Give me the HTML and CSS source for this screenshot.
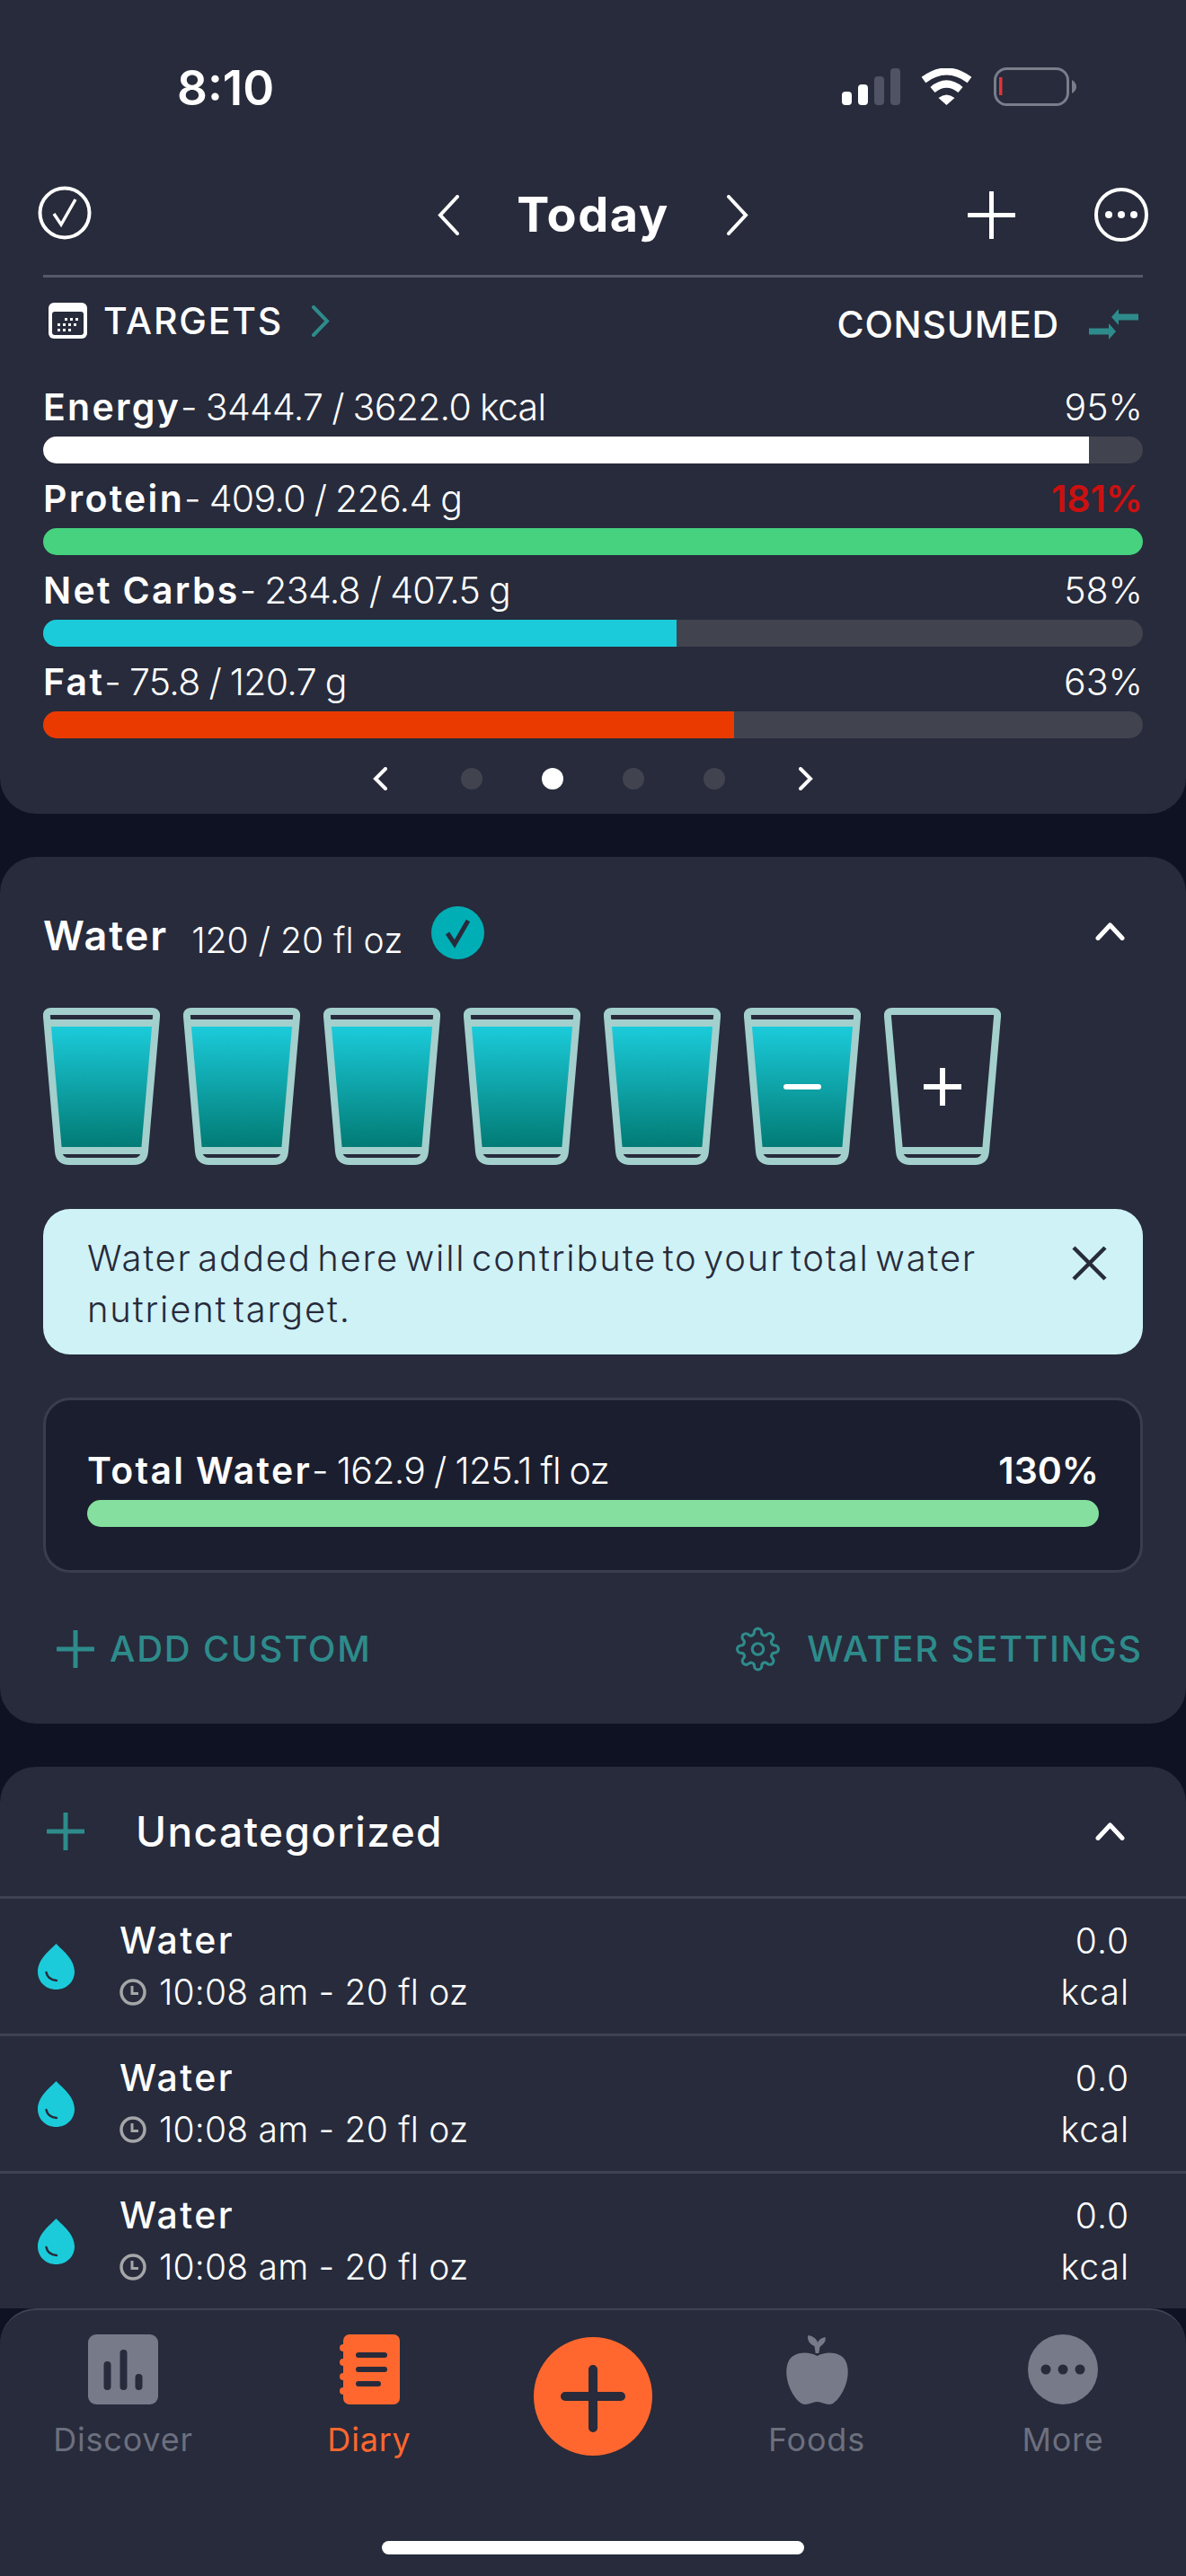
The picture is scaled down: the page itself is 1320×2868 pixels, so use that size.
FILE: index.html
```html
<!DOCTYPE html>
<html lang="en">
<head>
<meta charset="utf-8">
<title>Diary</title>
<link rel="stylesheet" href="styles.css">
</head>
<body>
<svg class="defs" aria-hidden="true">
  <defs>
    <linearGradient id="waterFill" x1="0" y1="0" x2="0" y2="1">
      <stop offset="0" stop-color="#1bcbda"/>
      <stop offset="1" stop-color="#027b75"/>
    </linearGradient>
    <symbol id="glass-full" viewBox="0 0 130 175">
      <path d="M8.3 21H121.7L110.7 155H19.3Z" fill="url(#waterFill)"/>
      <path d="M9 4H121Q127 4 126 10L113 160Q112 171 101 171H29Q18 171 17 160L4 10Q3 4 9 4Z" fill="none" stroke="#a3cfcd" stroke-width="8"/>
      <path d="M5 17H125M15 159H115" fill="none" stroke="#a3cfcd" stroke-width="8"/>
    </symbol>
    <symbol id="glass-empty" viewBox="0 0 130 175">
      <path d="M9 4H121Q127 4 126 10L113 160Q112 171 101 171H29Q18 171 17 160L4 10Q3 4 9 4Z" fill="none" stroke="#a3cfcd" stroke-width="8"/>
      <path d="M15 159H115" fill="none" stroke="#a3cfcd" stroke-width="8"/>
    </symbol>
    <symbol id="chev-up" viewBox="0 0 33 20">
      <path d="M3 17.5L16.5 3L30 17.5" fill="none" stroke="#fff" stroke-width="5" stroke-linecap="round" stroke-linejoin="round"/>
    </symbol>
    <symbol id="drop" viewBox="0 0 41 51">
      <path d="M20.5 0C26 6 41 17 41 31C41 42.500 32 51 20.500 51C9 51 0 42.500 0 31C0 17 15 6 20.500 0Z" fill="#1bcbda"/>
      <path d="M9.500 32C10.500 37 14 40.500 21 41" fill="none" stroke="#272b3b" stroke-width="2.500" stroke-linecap="round"/>
    </symbol>
    <symbol id="clock" viewBox="0 0 30 30">
      <circle cx="15" cy="15" r="13" fill="none" stroke="#a5a6a8" stroke-width="3.500"/>
      <path d="M14 8V16.500H21" fill="none" stroke="#a5a6a8" stroke-width="3"/>
    </symbol>
    <symbol id="plus-teal" viewBox="0 0 42 42">
      <path d="M21 1V41M1 21H41" fill="none" stroke="#2e8b8b" stroke-width="5" stroke-linecap="round"/>
    </symbol>
  </defs>
</svg>

<section class="card top-card">
  <div class="status">
    <span class="time">8:10</span>
    <svg class="signal" viewBox="0 0 65 41">
      <rect x="0" y="26" width="11" height="15" rx="4" fill="#fff"/>
      <rect x="18" y="18" width="11" height="23" rx="4" fill="#fff"/>
      <rect x="36" y="9" width="11" height="32" rx="4" fill="#4f5363"/>
      <rect x="54" y="0" width="11" height="41" rx="4" fill="#4f5363"/>
    </svg>
    <svg class="wifi" viewBox="0 0 57 41">
      <path d="M3 13Q28.500 -6 54 13M13 24Q28.500 11 44 24" fill="none" stroke="#fff" stroke-width="8"/>
      <path d="M19.500 33Q28.500 26 37.500 33L28.500 41Z" fill="#fff"/>
    </svg>
    <svg class="battery" viewBox="0 0 92 43">
      <rect x="1.500" y="1.500" width="81" height="40" rx="13" fill="none" stroke="#7a7d8a" stroke-width="3"/>
      <rect x="6" y="11" width="3.500" height="20" fill="#e0363a"/>
      <path d="M87 14Q92 17 92 21.500Q92 26 87 29Z" fill="#7a7d8a"/>
    </svg>
  </div>

  <nav class="topnav">
    <svg class="ic-check" viewBox="0 0 60 60">
      <circle cx="30" cy="30" r="27.500" fill="none" stroke="#fff" stroke-width="4"/>
      <path d="M18 31L26 43L42 15" fill="none" stroke="#fff" stroke-width="3.500"/>
    </svg>
    <div class="date">
      <svg class="ic-chev" viewBox="0 0 24 45"><path d="M22 2L3 22.500L22 43" fill="none" stroke="#fff" stroke-width="4" stroke-linecap="round"/></svg>
      <span class="today">Today</span>
      <svg class="ic-chev" viewBox="0 0 24 45"><path d="M2 2L21 22.500L2 43" fill="none" stroke="#fff" stroke-width="4" stroke-linecap="round"/></svg>
    </div>
    <div class="nav-actions">
      <svg class="ic-plus" viewBox="0 0 53 53"><path d="M26.500 1V52M1 26.500H52" fill="none" stroke="#fff" stroke-width="5" stroke-linecap="round"/></svg>
      <svg class="ic-more" viewBox="0 0 60 60">
        <circle cx="30" cy="30" r="28" fill="none" stroke="#fff" stroke-width="4"/>
        <circle cx="16" cy="30" r="4" fill="#fff"/><circle cx="30" cy="30" r="4" fill="#fff"/><circle cx="44" cy="30" r="4" fill="#fff"/>
      </svg>
    </div>
  </nav>

  <div class="rule"></div>

  <div class="targets-row">
    <div class="targets">
      <svg class="ic-cal" viewBox="0 0 43 40">
        <rect width="43" height="40" rx="6" fill="#fff"/>
        <rect x="4" y="10" width="35" height="26" rx="3" fill="#272b3b"/>
        <path d="M18 17h3v3h-3zM24 17h3v3h-3zM30 17h3v3h-3zM10 23h3v3h-3zM16 23h3v3h-3zM22 23h3v3h-3zM28 23h3v3h-3zM10 29h3v3h-3zM16 29h3v3h-3zM22 29h3v3h-3z" fill="#fff"/>
      </svg>
      <span class="targets-label">TARGETS</span>
      <svg class="ic-chev-teal" viewBox="0 0 20 35"><path d="M2 2L17 17.500L2 33" fill="none" stroke="#2e8b8b" stroke-width="4" stroke-linecap="round"/></svg>
    </div>
    <div class="consumed">
      <span class="consumed-label">CONSUMED</span>
      <svg class="ic-swap" viewBox="0 0 55 34">
        <path d="M55 9H28" fill="none" stroke="#2e8b8b" stroke-width="7"/>
        <path d="M25 9L33 0V18Z" fill="#2e8b8b"/>
        <path d="M0 25H27" fill="none" stroke="#2e8b8b" stroke-width="7"/>
        <path d="M30 25L22 16V34Z" fill="#2e8b8b"/>
      </svg>
    </div>
  </div>

  <div class="metric">
    <div class="metric-text"><span class="metric-copy"><b>Energy</b>- 3444.7 / 3622.0 kcal</span><span>95%</span></div>
    <div class="track"><div class="fill fill-white" style="width:95.1%"></div></div>
  </div>
  <div class="metric">
    <div class="metric-text"><span class="metric-copy"><b>Protein</b>- 409.0 / 226.4 g</span><span class="over">181%</span></div>
    <div class="track"><div class="fill fill-green" style="width:100%"></div></div>
  </div>
  <div class="metric">
    <div class="metric-text"><span class="metric-copy"><b>Net Carbs</b>- 234.8 / 407.5 g</span><span>58%</span></div>
    <div class="track"><div class="fill fill-cyan" style="width:57.6%"></div></div>
  </div>
  <div class="metric">
    <div class="metric-text"><span class="metric-copy"><b>Fat</b>- 75.8 / 120.7 g</span><span>63%</span></div>
    <div class="track"><div class="fill fill-red" style="width:62.8%"></div></div>
  </div>

  <div class="pager">
    <svg class="ic-pg" viewBox="0 0 16 26"><path d="M14 2L3 13L14 24" fill="none" stroke="#fff" stroke-width="4" stroke-linecap="round"/></svg>
    <div class="dots">
      <span class="dot"></span><span class="dot dot-on"></span><span class="dot"></span><span class="dot"></span>
    </div>
    <svg class="ic-pg" viewBox="0 0 16 26"><path d="M2 2L13 13L2 24" fill="none" stroke="#fff" stroke-width="4" stroke-linecap="round"/></svg>
  </div>
</section>

<section class="card water-card">
  <div class="water-head">
    <span class="water-title">Water</span>
    <span class="water-amount">120 / 20 fl oz</span>
    <svg class="ic-done" viewBox="0 0 59 59">
      <circle cx="29.500" cy="29.500" r="29.500" fill="#00aeb5"/>
      <path d="M18 30L26 42L41 16" fill="none" stroke="#272b3b" stroke-width="5"/>
    </svg>
    <svg class="ic-up"><use href="#chev-up"/></svg>
  </div>

  <div class="glasses">
    <svg class="glass"><use href="#glass-full"/></svg>
    <svg class="glass"><use href="#glass-full"/></svg>
    <svg class="glass"><use href="#glass-full"/></svg>
    <svg class="glass"><use href="#glass-full"/></svg>
    <svg class="glass"><use href="#glass-full"/></svg>
    <div class="glass-wrap">
      <svg class="glass"><use href="#glass-full"/></svg>
      <svg class="glass-sign" viewBox="0 0 42 42"><path d="M3 21H39" fill="none" stroke="#fff" stroke-width="6" stroke-linecap="round"/></svg>
    </div>
    <div class="glass-wrap">
      <svg class="glass"><use href="#glass-empty"/></svg>
      <svg class="glass-sign" viewBox="0 0 42 42"><path d="M21 0V42M0 21H42" fill="none" stroke="#fff" stroke-width="6"/></svg>
    </div>
  </div>

  <div class="notice">
    <p class="notice-text">Water added here will contribute to your total water nutrient target.</p>
    <svg class="ic-close" viewBox="0 0 39 39"><path d="M2 2L37 37M37 2L2 37" fill="none" stroke="#272b3b" stroke-width="4.500"/></svg>
  </div>

  <div class="total">
    <div class="metric-text"><span class="metric-copy"><b>Total Water</b>- 162.9 / 125.1 fl oz</span><b>130%</b></div>
    <div class="track"><div class="fill fill-mint" style="width:100%"></div></div>
  </div>

  <div class="water-actions">
    <div class="add-custom">
      <svg class="ic-add"><use href="#plus-teal"/></svg>
      <span class="action-label">ADD CUSTOM</span>
    </div>
    <div class="water-settings">
      <svg class="ic-gear" viewBox="0 0 24 24" fill="none" stroke="#2e8b8b" stroke-width="1.500">
        <circle cx="12" cy="12" r="3"/>
        <path d="M19.400 15a1.650 1.650 0 0 0 .33 1.820l.06.06a2 2 0 0 1 0 2.830 2 2 0 0 1-2.830 0l-.06-.06a1.650 1.650 0 0 0-1.820-.33 1.650 1.650 0 0 0-1 1.510V21a2 2 0 0 1-2 2 2 2 0 0 1-2-2v-.09A1.650 1.650 0 0 0 9 19.400a1.650 1.650 0 0 0-1.820.33l-.06.06a2 2 0 0 1-2.830 0 2 2 0 0 1 0-2.830l.06-.06a1.650 1.650 0 0 0 .33-1.820 1.650 1.650 0 0 0-1.510-1H3a2 2 0 0 1-2-2 2 2 0 0 1 2-2h.09A1.650 1.650 0 0 0 4.600 9a1.650 1.650 0 0 0-.33-1.820l-.06-.06a2 2 0 0 1 0-2.830 2 2 0 0 1 2.830 0l.06.06a1.650 1.650 0 0 0 1.820.33H9a1.650 1.650 0 0 0 1-1.510V3a2 2 0 0 1 2-2 2 2 0 0 1 2 2v.09a1.650 1.650 0 0 0 1 1.510 1.650 1.650 0 0 0 1.820-.33l.06-.06a2 2 0 0 1 2.830 0 2 2 0 0 1 0 2.830l-.06.06a1.650 1.650 0 0 0-.33 1.820V9a1.650 1.650 0 0 0 1.510 1H21a2 2 0 0 1 2 2 2 2 0 0 1-2 2h-.09a1.650 1.650 0 0 0-1.510 1z"/>
      </svg>
      <span class="action-label">WATER SETTINGS</span>
    </div>
  </div>
</section>

<section class="list-card">
  <div class="list-head">
    <svg class="ic-list-add"><use href="#plus-teal"/></svg>
    <span class="list-title">Uncategorized</span>
    <svg class="ic-up"><use href="#chev-up"/></svg>
  </div>
  <div class="entry">
    <svg class="ic-drop"><use href="#drop"/></svg>
    <div class="entry-main">
      <div class="entry-name">Water</div>
      <div class="entry-sub"><svg class="ic-clock"><use href="#clock"/></svg>10:08 am - 20 fl oz</div>
    </div>
    <div class="entry-kcal"><div>0.0</div><div>kcal</div></div>
  </div>
  <div class="entry">
    <svg class="ic-drop"><use href="#drop"/></svg>
    <div class="entry-main">
      <div class="entry-name">Water</div>
      <div class="entry-sub"><svg class="ic-clock"><use href="#clock"/></svg>10:08 am - 20 fl oz</div>
    </div>
    <div class="entry-kcal"><div>0.0</div><div>kcal</div></div>
  </div>
  <div class="entry">
    <svg class="ic-drop"><use href="#drop"/></svg>
    <div class="entry-main">
      <div class="entry-name">Water</div>
      <div class="entry-sub"><svg class="ic-clock"><use href="#clock"/></svg>10:08 am - 20 fl oz</div>
    </div>
    <div class="entry-kcal"><div>0.0</div><div>kcal</div></div>
  </div>
</section>

<footer class="tabbar">
  <div class="tabs">
    <div class="tab">
      <svg class="tab-icon ic-discover" viewBox="0 0 78 78">
        <rect width="78" height="78" rx="9" fill="#777a88"/>
        <path d="M21.500 34V58M39.500 21V58M56.500 48V58" fill="none" stroke="#272b3b" stroke-width="8" stroke-linecap="round"/>
      </svg>
      <span class="tab-label">Discover</span>
    </div>
    <div class="tab tab-diary">
      <svg class="tab-icon ic-diary" viewBox="0 0 67 78">
        <rect x="4" width="63" height="78" rx="7" fill="#ff672e"/>
        <circle cx="4" cy="15" r="4" fill="#ff672e"/><circle cx="4" cy="31" r="4" fill="#ff672e"/><circle cx="4" cy="47" r="4" fill="#ff672e"/><circle cx="4" cy="63" r="4" fill="#ff672e"/>
        <path d="M21 23H50M21 39H50M21 55H43" fill="none" stroke="#272b3b" stroke-width="6" stroke-linecap="round"/>
      </svg>
      <span class="tab-label tab-label-on">Diary</span>
    </div>
    <svg class="fab" viewBox="0 0 132 132">
      <circle cx="66" cy="66" r="66" fill="#ff672e"/>
      <path d="M66 36V101M35 66H97" fill="none" stroke="#272b3b" stroke-width="10" stroke-linecap="round"/>
    </svg>
    <div class="tab tab-foods">
      <svg class="tab-icon ic-apple" viewBox="0 0 59 78" preserveAspectRatio="none">
        <path d="M29.500 24C22 19 8 18 3 30C-3 46 6 70 15 77C20 80 25 75 29.500 75C34 75 39 80 44 77C53 70 62 46 56 30C51 18 37 19 29.500 24Z" fill="#777a88"/>
        <path d="M28 21L27 13C23 11 20 7 21 1C26 2 29 5 30 9C31 6 33 4 37 3C38 8 35 11 32 14L31 21Z" fill="#777a88"/>
      </svg>
      <span class="tab-label">Foods</span>
    </div>
    <div class="tab tab-more">
      <svg class="tab-icon ic-more-tab" viewBox="0 0 78 78">
        <circle cx="39" cy="39" r="39" fill="#777a88"/>
        <circle cx="20" cy="39" r="5.500" fill="#272b3b"/><circle cx="39" cy="39" r="5.500" fill="#272b3b"/><circle cx="58" cy="39" r="5.500" fill="#272b3b"/>
      </svg>
      <span class="tab-label">More</span>
    </div>
  </div>
  <div class="home"></div>
</footer>
</body>
</html>
```

FILE: styles.css
```css
* { box-sizing: border-box; }
html, body { margin: 0; padding: 0; }
body {
  width: 1320px;
  height: 2868px;
  overflow: hidden;
  background: #0f1222;
  color: #fff;
  font-family: Inter, "Liberation Sans", sans-serif;
  font-weight: 300;
}
svg { display: block; flex: none; }
.defs { position: absolute; width: 0; height: 0; }

.card { background: #272b3b; padding: 0 48px; }
b { font-weight: 600; }

/* top card */
.top-card { height: 906px; border-radius: 0 0 40px 40px; }
.status {
  display: flex;
  align-items: center;
  height: 136px;
  margin: 0 -48px;
  padding: 60px 122px 0 197px;
}
.time { font-size: 53px; font-weight: 600; line-height: 76px; }
.signal { width: 65px; height: 41px; margin-left: auto; margin-top: -4px; }
.wifi { width: 57px; height: 41px; margin-left: 23px; margin-top: -4px; }
.battery { width: 92px; height: 43px; margin-left: 24px; margin-top: -4px; }

.topnav {
  display: grid;
  grid-template-columns: 1fr auto 1fr;
  align-items: center;
  height: 86px;
  margin: 60px -6px 0;
}
.ic-check { width: 60px; height: 60px; margin-top: -4px; }
.date { display: flex; align-items: center; gap: 64px; }
.ic-chev { width: 24px; height: 45px; }
.today { font-size: 54px; font-weight: 700; line-height: 86px; letter-spacing: 1.500px; }
.nav-actions { display: flex; align-items: center; justify-content: flex-end; gap: 88px; }
.ic-plus { width: 53px; height: 53px; }
.ic-more { width: 60px; height: 60px; }

.rule { height: 3px; margin-top: 24px; background: #555968; }

.targets-row { display: flex; justify-content: space-between; height: 120px; }
.targets { display: flex; align-items: center; height: 48px; margin: 24px 0 0 6px; }
.ic-cal { width: 43px; height: 40px; }
.targets-label { font-size: 41px; font-weight: 500; line-height: 48px; margin-left: 18px; letter-spacing: 1.800px; }
.ic-chev-teal { width: 20px; height: 35px; margin-left: 32px; }
.consumed { display: flex; align-items: center; height: 48px; margin: 28px 5px 0 0; }
.consumed-label { font-size: 41px; font-weight: 500; line-height: 48px; letter-spacing: 0.800px; }
.ic-swap { width: 55px; height: 34px; margin-left: 33px; }

.metric { margin-bottom: 15px; }
.metric-text {
  display: flex;
  justify-content: space-between;
  height: 48px;
  font-size: 41px;
  line-height: 48px;
}
.metric-copy { letter-spacing: -0.700px; word-spacing: -1px; }
.metric-copy b { letter-spacing: 2.300px; }
.over { color: #cc1010; font-weight: 600; }
.track {
  height: 30px;
  margin-top: 9px;
  border-radius: 15px;
  overflow: hidden;
  background: #41444f;
}
.fill { height: 100%; }
.fill-white { background: #fff; }
.fill-green { background: #46d27e; }
.fill-cyan { background: #1bcbda; }
.fill-red { background: #ea3a00; }
.fill-mint { background: #85df9f; }

.pager {
  display: flex;
  justify-content: center;
  align-items: center;
  gap: 82px;
  height: 40px;
  margin-top: 25px;
}
.ic-pg { width: 16px; height: 26px; }
.dots { display: flex; gap: 66px; }
.dot { width: 24px; height: 24px; border-radius: 50%; background: #41444f; }
.dot-on { background: #fff; }

/* water card */
.water-card { height: 965px; margin-top: 48px; padding-top: 58px; border-radius: 40px; }
.water-head { display: flex; align-items: center; height: 60px; }
.water-title { font-size: 45px; font-weight: 600; line-height: 60px; letter-spacing: 2px; }
.water-amount { font-size: 39px; line-height: 60px; margin-left: 26px; padding-top: 10px; }
.ic-done { width: 59px; height: 59px; margin-left: 32px; margin-bottom: 8px; }
.ic-up { width: 33px; height: 20px; margin-left: auto; margin-right: 20px; margin-bottom: 10px; }

.glasses { display: flex; gap: 26px; margin-top: 50px; }
.glass { width: 130px; height: 175px; }
.glass-wrap { display: grid; place-items: center; }
.glass-wrap > svg { grid-area: 1 / 1; }
.glass-sign { width: 42px; height: 42px; margin-top: 1px; }

.notice {
  display: flex;
  justify-content: space-between;
  height: 162px;
  margin-top: 49px;
  padding: 26px 40px 0 49px;
  border-radius: 30px;
  background: #cff2f6;
  color: #272b3b;
}
.notice-text { width: 1060px; margin: 0; font-size: 40px; line-height: 57px; letter-spacing: 1.800px; word-spacing: -6.500px; }
.ic-close { width: 39px; height: 39px; margin-top: 15px; }

.total {
  height: 195px;
  margin-top: 48px;
  padding: 54px 46px 0;
  border: 3px solid #3a3d4f;
  border-radius: 30px;
  background: #1b1e2e;
}

.water-actions {
  display: flex;
  justify-content: space-between;
  align-items: center;
  height: 50px;
  margin-top: 60px;
  color: #2e8b8b;
}
.add-custom { display: flex; align-items: center; margin-left: 15px; }
.water-settings { display: flex; align-items: center; margin-right: 0; }
.ic-add { width: 42px; height: 42px; }
.action-label { font-size: 40px; font-weight: 500; line-height: 50px; margin-left: 17px; letter-spacing: 1.800px; }
.ic-gear { width: 51px; height: 50px; margin-right: 12px; }

/* list */
.list-card {
  height: 603px;
  margin-top: 48px;
  border-radius: 40px 40px 0 0;
  background: #272b3b;
}
.list-head { display: flex; align-items: center; height: 144px; padding-left: 52px; }
.ic-list-add { width: 42px; height: 42px; }
.list-title { font-size: 46px; font-weight: 500; margin-left: 57px; letter-spacing: 1.400px; }
.list-head .ic-up { margin-right: 68px; margin-bottom: 0; }

.entry {
  display: flex;
  align-items: center;
  height: 153px;
  padding: 0 63px 0 42px;
  border-top: 3px solid #3f4254;
}
.ic-drop { width: 41px; height: 51px; }
.entry-main { margin-left: 50px; }
.entry-name { font-size: 41px; font-weight: 500; line-height: 57px; letter-spacing: 2.500px; }
.entry-sub { display: flex; align-items: center; font-size: 39px; line-height: 57px; letter-spacing: 0.200px; }
.ic-clock { width: 30px; height: 30px; margin-right: 14px; }
.entry-kcal { margin-left: auto; font-size: 39px; line-height: 57px; text-align: right; letter-spacing: 1px; }

/* tabs */
.tabbar {
  height: 298px;
  border-top: 2px solid #3f4254;
  border-radius: 40px 40px 0 0;
  background: #272b3b;
}
.tabs { display: flex; height: 232px; padding: 27px 0 0 57px; }
.tab { display: flex; flex-direction: column; align-items: center; width: 160px; }
.tab-icon { height: 78px; }
.ic-discover { width: 78px; }
.ic-diary { width: 67px; }
.ic-apple { width: 71px; }
.ic-more-tab { width: 78px; }
.tab-label { margin-top: 17px; font-size: 36px; font-weight: 400; line-height: 44px; letter-spacing: 0.800px; color: #6c6f7e; }
.tab-label-on { color: #ff672e; }
.tab-diary { margin-left: 114px; }
.fab { width: 132px; height: 132px; margin: 3px 0 0 103px; }
.tab-foods { margin-left: 103px; }
.tab-more { margin-left: 114px; }
.home { width: 470px; height: 15px; margin: 25px auto 0; border-radius: 8px; background: #fff; }
```
